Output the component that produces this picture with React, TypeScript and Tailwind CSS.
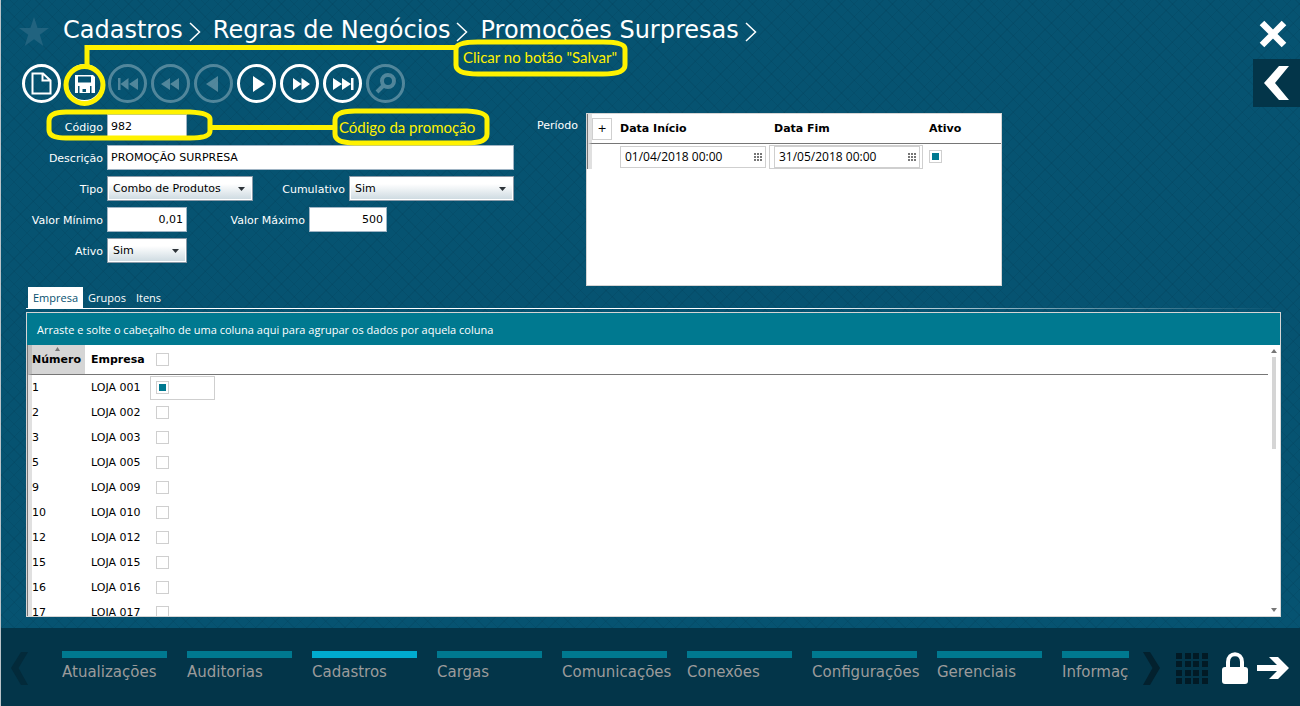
import clsx from "clsx";
import { ReactNode, useState } from "react";

const STORES = [
    { id: 1, name: "LOJA 001" },
    { id: 2, name: "LOJA 002" },
    { id: 3, name: "LOJA 003" },
    { id: 5, name: "LOJA 005" },
    { id: 9, name: "LOJA 009" },
    { id: 10, name: "LOJA 010" },
    { id: 12, name: "LOJA 012" },
    { id: 15, name: "LOJA 015" },
    { id: 16, name: "LOJA 016" },
    { id: 17, name: "LOJA 017" }
];
const MODULES = [
    "Atualizações",
    "Auditorias",
    "Cadastros",
    "Cargas",
    "Comunicações",
    "Conexões",
    "Configurações",
    "Gerenciais",
    "Informações"
];
const TABS = ["Empresa", "Grupos", "Itens"];

const checkboxClass =
    "block w-[13px] h-[13px] appearance-none border border-[#cfcfcf] bg-white checked:bg-[#007990] checked:shadow-[inset_0_0_0_2px_white]";
const inputClass =
    "h-[25px] border border-[#9fb4c4] bg-white text-black px-[3px] outline-none";

function Crumb({ children }: { children: ReactNode }) {
    return (
        <li className="flex items-center gap-[6px]">
            <a href="#" className="text-white">
                {children}
            </a>
            <svg width="12" height="20" className="mt-1" fill="none">
                <path d="M1 1L10.5 10L1 19" stroke="#fff" strokeWidth="1.5" />
            </svg>
        </li>
    );
}

type ToolButtonProps = {
    label: string;
    disabled?: boolean;
    children: ReactNode;
};
function ToolButton({ label, disabled, children }: ToolButtonProps) {
    return (
        <button
            aria-label={label}
            disabled={disabled}
            className="w-[39px] h-[39px] rounded-full border-3 border-white flex items-center justify-center text-white disabled:opacity-30"
        >
            <svg width="33" height="33" viewBox="0 0 33 33" fill="currentColor">
                {children}
            </svg>
        </button>
    );
}

type SelectProps = {
    id: string;
    options: string[];
    className: string;
};
function Select({ id, options, className }: SelectProps) {
    return (
        <div className={clsx("relative h-[25px]", className)}>
            <select
                id={id}
                className="w-full h-full appearance-none border border-[#8a9aa8] bg-linear-to-b from-white from-30% to-[#ccd9e0] text-black pl-[5px] shadow-[inset_0_0_0_1px_white] outline-none"
            >
                {options.map((o) => (
                    <option key={o}>{o}</option>
                ))}
            </select>
            <svg
                width="7"
                height="4"
                className="absolute right-2 top-[11px] pointer-events-none"
            >
                <path d="M0 0H7L3.5 4Z" fill="#2d3338" />
            </svg>
        </div>
    );
}

function DateInput({ label, value }: { label: string; value: string }) {
    return (
        <div className="w-[146px] h-[22px] border border-[#cfcfcf] flex items-center pr-[3px]">
            <input
                aria-label={label}
                defaultValue={value}
                className="min-w-0 flex-1 px-1 font-['Open_Sans','Noto_Sans',sans-serif] text-[12px] outline-none"
            />
            <svg width="8" height="8" fill="#767676">
                {[0, 3, 6].map((y) =>
                    [0, 3, 6].map((x) => (
                        <rect key={`${x}${y}`} x={x} y={y} width="2" height="2" />
                    ))
                )}
            </svg>
        </div>
    );
}

function Header() {
    return (
        <header className="flex justify-between">
            <div className="pt-4 pl-[17px]">
                <div className="flex items-center h-8 gap-[13px]">
                    <svg width="32" height="32" viewBox="0 0 32 32" fill="#21637f">
                        <path d="M16 1L19.6 12H31L21.8 18.8L25.3 30L16 23.2L6.7 30L10.2 18.8L1 12H12.4Z" />
                    </svg>
                    <ol className="flex gap-3 pb-1 text-[24px] leading-7 whitespace-nowrap">
                        <Crumb>Cadastros</Crumb>
                        <Crumb>Regras de Negócios</Crumb>
                        <Crumb>Promoções Surpresas</Crumb>
                    </ol>
                </div>
                <div className="flex gap-1 pl-1 pt-4">
                    <ToolButton label="Novo">
                        <path
                            d="M7.500 6.500H18L25.500 13.500V26.500H7.500ZM17.500 7V13.500H25"
                            fill="none"
                            stroke="currentColor"
                            strokeWidth="2"
                        />
                    </ToolButton>
                    <ToolButton label="Salvar">
                        <path
                            fillRule="evenodd"
                            d="M7 8H25L27 10V26H7ZM10 9.500V15.500H23V9.500ZM10 19V26H11.500V19ZM22 19V26H23.500V19ZM14.500 22V25H18V22Z"
                        />
                    </ToolButton>
                    <ToolButton label="Primeiro" disabled>
                        <path d="M7 11H9.500V23H7ZM17.500 11V23L9.500 17ZM27 11V23L18 17Z" />
                    </ToolButton>
                    <ToolButton label="Voltar página" disabled>
                        <path d="M16 11V23L7 17ZM25 11V23L16 17Z" />
                    </ToolButton>
                    <ToolButton label="Anterior" disabled>
                        <path d="M21 9V25L9 17Z" />
                    </ToolButton>
                    <ToolButton label="Próximo">
                        <path d="M13 9V25L25 17Z" />
                    </ToolButton>
                    <ToolButton label="Avançar página">
                        <path d="M10 11V23L18.500 17ZM18.500 11V23L27 17Z" />
                    </ToolButton>
                    <ToolButton label="Último">
                        <path d="M7 11V23L16 17ZM16 11V23L25 17ZM25 11H27.500V23H25Z" />
                    </ToolButton>
                    <ToolButton label="Pesquisar" disabled>
                        <path
                            d="M25 14A6 6 0 1 1 13 14A6 6 0 1 1 25 14M14.500 18.500L8 25"
                            fill="none"
                            stroke="currentColor"
                            strokeWidth="4"
                        />
                    </ToolButton>
                </div>
            </div>
            <div className="w-[47px] pt-5 flex flex-col gap-[11px]">
                <button aria-label="Fechar" className="pl-[6px] h-7">
                    <svg width="28" height="28" fill="none">
                        <path
                            d="M3 3L25 25M25 3L3 25"
                            stroke="#fff"
                            strokeWidth="6.500"
                        />
                    </svg>
                </button>
                <button
                    aria-label="Abrir painel"
                    className="h-12 bg-[#033549] pl-[11px]"
                >
                    <svg width="26" height="34" fill="#fff">
                        <path d="M15 0H25L11 17L25 34H15L0 17Z" />
                    </svg>
                </button>
            </div>
        </header>
    );
}

function PromotionForm() {
    return (
        <form className="w-[513px] pt-px flex flex-col gap-[6px] [&_label]:text-white [&_label]:text-right [&_label]:pr-1 [&_label]:pt-[2px] [&_label]:shrink-0">
            <div className="flex items-center">
                <label htmlFor="codigo" className="w-[106px]">
                    Código
                </label>
                <input
                    id="codigo"
                    defaultValue="982"
                    className={clsx(inputClass, "w-20")}
                />
            </div>
            <div className="flex items-center">
                <label htmlFor="descricao" className="w-[106px]">
                    Descrição
                </label>
                <input
                    id="descricao"
                    defaultValue="PROMOÇÃO SURPRESA"
                    className={clsx(inputClass, "flex-1 min-w-0")}
                />
            </div>
            <div className="flex items-center">
                <label htmlFor="tipo" className="w-[106px]">
                    Tipo
                </label>
                <Select
                    id="tipo"
                    options={["Combo de Produtos"]}
                    className="w-[146px]"
                />
                <label htmlFor="cumulativo" className="w-24">
                    Cumulativo
                </label>
                <Select
                    id="cumulativo"
                    options={["Sim", "Não"]}
                    className="flex-1"
                />
            </div>
            <div className="flex items-center">
                <label htmlFor="minimo" className="w-[106px]">
                    Valor Mínimo
                </label>
                <input
                    id="minimo"
                    defaultValue="0,01"
                    className={clsx(inputClass, "w-20 text-right")}
                />
                <label htmlFor="maximo" className="w-[122px]">
                    Valor Máximo
                </label>
                <input
                    id="maximo"
                    defaultValue="500"
                    className={clsx(inputClass, "w-[78px] text-right")}
                />
            </div>
            <div className="flex items-center">
                <label htmlFor="ativo" className="w-[106px]">
                    Ativo
                </label>
                <Select id="ativo" options={["Sim", "Não"]} className="w-20" />
            </div>
        </form>
    );
}

function PeriodTable() {
    return (
        <div className="w-[416px] h-[173px] border border-[#d5d5d5] bg-white text-black">
            <div className="border-l border-[#767676]">
                <table className="w-full table-fixed border-separate border-spacing-0">
                    <thead>
                        <tr className="h-[30px] text-left [&>th]:border-b [&>th]:border-b-[#767676]">
                            <th className="w-8 border-l-4 border-l-[#e0e0e0] p-0">
                                <button
                                    aria-label="Adicionar período"
                                    className="block mt-px w-5 h-[22px] border border-[#cfcfcf] text-[11px] font-normal"
                                >
                                    +
                                </button>
                            </th>
                            <th className="w-[154px] p-0">Data Início</th>
                            <th className="w-[155px] p-0">Data Fim</th>
                            <th className="p-0">Ativo</th>
                        </tr>
                    </thead>
                    <tbody>
                        <tr className="h-[25px]">
                            <td className="border-l-4 border-[#e0e0e0] p-0" />
                            <td className="p-0">
                                <DateInput
                                    label="Data Início"
                                    value="01/04/2018 00:00"
                                />
                            </td>
                            <td className="p-0">
                                <div className="-ml-[5px] mr-[6px] pl-1 border border-[#cfcfcf]">
                                    <DateInput
                                        label="Data Fim"
                                        value="31/05/2018 00:00"
                                    />
                                </div>
                            </td>
                            <td className="p-0">
                                <input
                                    type="checkbox"
                                    aria-label="Período ativo"
                                    defaultChecked
                                    className={checkboxClass}
                                />
                            </td>
                        </tr>
                    </tbody>
                </table>
            </div>
        </div>
    );
}

function StoreGrid() {
    const [selected, setSelected] = useState<number[]>([1]);
    const toggle = (id: number) =>
        setSelected((prev) =>
            prev.includes(id) ? prev.filter((s) => s !== id) : [...prev, id]
        );

    return (
        <div className="flex-1 min-h-0 flex flex-col border border-[#d5d5d5] bg-white text-black overflow-hidden">
            <div className="h-8 shrink-0 bg-[#007990] text-white flex items-center pl-[10px] pt-px font-['Open_Sans','Noto_Sans',sans-serif] text-[11px]">
                Arraste e solte o cabeçalho de uma coluna aqui para agrupar os
                dados por aquela coluna
            </div>
            <div className="flex-1 min-h-0 flex">
                <div className="flex-1 overflow-hidden border-l border-[#767676]">
                    <table className="w-full table-fixed border-separate border-spacing-0">
                        <thead>
                            <tr className="h-[30px] text-left [&>th]:border-b [&>th]:border-b-[#767676]">
                                <th className="relative w-[57px] p-0 border-l-4 border-l-[#bdbdbd] bg-[#d5d5d5]">
                                    Número
                                    <svg
                                        width="5"
                                        height="4"
                                        className="absolute left-[23px] top-[2px]"
                                    >
                                        <path d="M2.500 0L5 4H0Z" fill="#767676" />
                                    </svg>
                                </th>
                                <th className="w-[65px] p-0 pl-[6px]">Empresa</th>
                                <th className="p-0 pl-[6px]">
                                    <input
                                        type="checkbox"
                                        aria-label="Marcar todas"
                                        className={checkboxClass}
                                    />
                                </th>
                            </tr>
                        </thead>
                        <tbody>
                            {STORES.map(({ id, name }) => (
                                <tr key={id} className="h-[25px]">
                                    <td className="p-0 border-l-4 border-[#e0e0e0]">
                                        {id}
                                    </td>
                                    <td className="p-0 pl-[6px] whitespace-nowrap">
                                        {name}
                                    </td>
                                    <td className="p-0">
                                        <div
                                            className={clsx(
                                                "w-[65px] h-6 flex items-center pl-[5px] border",
                                                id === 1
                                                    ? "border-[#cfcfcf]"
                                                    : "border-transparent"
                                            )}
                                        >
                                            <input
                                                type="checkbox"
                                                aria-label={name}
                                                checked={selected.includes(id)}
                                                onChange={() => toggle(id)}
                                                className={checkboxClass}
                                            />
                                        </div>
                                    </td>
                                </tr>
                            ))}
                        </tbody>
                    </table>
                </div>
                <div className="w-3 flex flex-col items-center justify-between py-1">
                    <div className="flex flex-col items-center gap-1">
                        <svg width="6" height="4">
                            <path d="M3 0L6 4H0Z" fill="#767676" />
                        </svg>
                        <div className="w-1 h-[92px] bg-[#d5d5d5]" />
                    </div>
                    <svg width="6" height="4">
                        <path d="M0 0H6L3 4Z" fill="#767676" />
                    </svg>
                </div>
            </div>
        </div>
    );
}

function Footer() {
    return (
        <footer className="h-[78px] shrink-0 bg-[#033549] flex items-start pt-[23px] pr-[11px]">
            <button aria-label="Módulos anteriores" className="w-[61px] pl-[10px]">
                <svg width="17" height="34" fill="#032a3a">
                    <path d="M10 1H17L7.500 17L17 34H10L0 17Z" />
                </svg>
            </button>
            <nav className="flex-1 min-w-0 flex gap-5 overflow-hidden text-[15px] leading-[22px]">
                {MODULES.map((m) => (
                    <a
                        key={m}
                        href="#"
                        className={clsx(
                            "w-[105px] shrink-0 border-t-7 pt-[3px] text-[#9b9b9b] whitespace-nowrap",
                            m === "Cadastros"
                                ? "border-[#00abcf]"
                                : "border-[#007990]"
                        )}
                    >
                        {m}
                    </a>
                ))}
            </nav>
            <div className="flex items-start pl-[14px]">
                <button aria-label="Próximos módulos" className="w-[33px]">
                    <svg width="17" height="34" fill="#03212e">
                        <path d="M0 1H7L17 17L7 34H0L9.500 17Z" />
                    </svg>
                </button>
                <button aria-label="Aplicativos" className="w-[46px]">
                    <svg width="32" height="33" fill="#021a25">
                        {[2, 10, 19, 27].map((y) =>
                            [0, 9, 17, 26].map((x) => (
                                <rect
                                    key={`${x}-${y}`}
                                    x={x}
                                    y={y}
                                    width="6"
                                    height="6"
                                />
                            ))
                        )}
                    </svg>
                </button>
                <button aria-label="Bloquear" className="w-[35px]">
                    <svg width="26" height="34">
                        <path
                            d="M6 18V11C6 0.500 20 0.500 20 11V18"
                            fill="none"
                            stroke="#fff"
                            strokeWidth="4"
                        />
                        <rect y="16" width="26" height="17" rx="3" fill="#fff" />
                    </svg>
                </button>
                <button aria-label="Sair">
                    <svg width="32" height="34" fill="#fff">
                        <path d="M0 14H20L12 6H21L32 17L21 28H12L20 20H0Z" />
                    </svg>
                </button>
            </div>
        </footer>
    );
}

// Help marks drawn over the toolbar and the form
function Callouts() {
    return (
        <div className="absolute left-0 top-0 pointer-events-none font-[Lato,sans-serif] text-[15px] leading-5 text-[#fff200] whitespace-nowrap">
            <svg
                width="640"
                height="150"
                fill="none"
                stroke="#fff200"
                strokeWidth="5"
            >
                <path d="M86 66V47.500H455" />
                <ellipse cx="83.500" cy="85" rx="18.500" ry="18.500" />
                <path d="M477 42H602Q624 42 624 49V65Q624 74 602 74H477Q455 74 455 65V49Q455 42 477 42Z" />
                <path d="M65 112H189Q209 113 209 119V131Q209 138 189 138H65Q48 138 48 130V121Q48 112 65 112Z" />
                <path d="M210 127.500H334" />
                <path d="M354 111H466Q486 112 486 119V134Q486 143 466 143H354Q334 143 334 134V120Q334 111 354 111Z" />
            </svg>
            <span className="absolute left-[462px] top-[47px]">
                Clicar no botão "Salvar"
            </span>
            <span className="absolute left-[338px] top-[117px]">
                Código da promoção
            </span>
        </div>
    );
}

function App() {
    const [tab, setTab] = useState(TABS[0]);

    return (
        <div className="relative h-screen min-h-[520px] flex flex-col border-l border-[#b9c3c9] bg-[#065371] font-['DejaVu_Sans',Verdana,sans-serif] text-[11px] leading-4">
            <div className="flex-1 min-h-0 flex flex-col bg-[repeating-linear-gradient(45deg,rgba(0,40,60,0.1)_0_1px,transparent_1px_9px),repeating-linear-gradient(-45deg,rgba(0,40,60,0.1)_0_1px,transparent_1px_9px)]">
                <Header />
                <main className="flex-1 min-h-0 flex flex-col pb-[11px]">
                    <div className="flex items-start pt-[6px] h-[180px] shrink-0">
                        <PromotionForm />
                        <span className="w-[72px] pr-2 pt-[5px] text-right text-white">
                            Período
                        </span>
                        <PeriodTable />
                    </div>
                    <div className="flex-1 min-h-0 flex flex-col pl-[25px] pr-[19px]">
                        <div
                            role="tablist"
                            className="flex pl-[2px] font-['Open_Sans','Noto_Sans',sans-serif]"
                        >
                            {TABS.map((t) => (
                                <button
                                    key={t}
                                    role="tab"
                                    aria-selected={t === tab}
                                    onClick={() => setTab(t)}
                                    className={clsx(
                                        "h-[21px] px-[5px]",
                                        t === tab
                                            ? "bg-white text-[#05506f]"
                                            : "text-white"
                                    )}
                                >
                                    {t}
                                </button>
                            ))}
                        </div>
                        <div className="h-px shrink-0 mb-[3px] bg-linear-to-r from-white from-60% to-transparent" />
                        <StoreGrid />
                    </div>
                </main>
            </div>
            <Footer />
            <Callouts />
        </div>
    );
}

export default App;
